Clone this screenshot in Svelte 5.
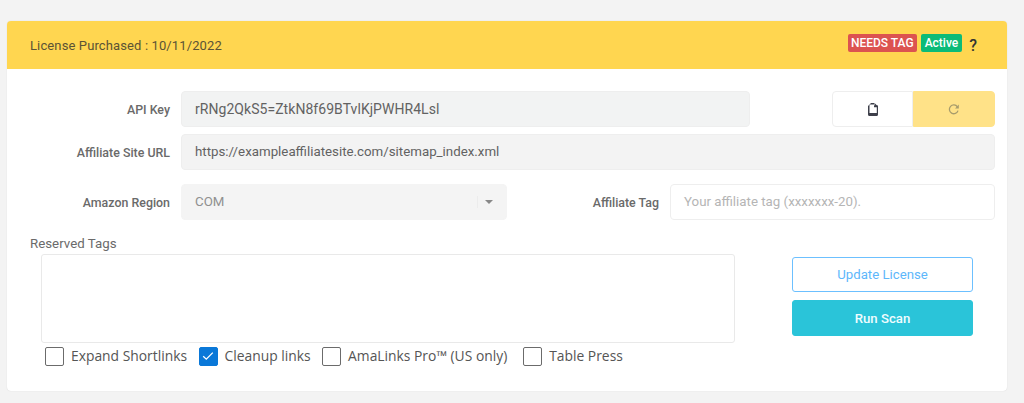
<script lang="ts">
	const options = [
		{ label: 'Expand Shortlinks', checked: false },
		{ label: 'Cleanup links', checked: true },
		{ label: 'AmaLinks Pro™ (US only)', checked: false },
		{ label: 'Table Press', checked: false }
	];
</script>

<div class="page">
	<section class="card">
		<header class="card-header">
			<span class="purchased">License Purchased : 10/11/2022</span>
			<div class="status">
				<span class="badge danger">NEEDS TAG</span>
				<span class="badge success">Active</span>
				<span class="help">?</span>
			</div>
		</header>

		<div class="card-body">
			<div class="row row-key">
				<span class="label">API Key</span>
				<div class="field key-field">rRNg2QkS5=ZtkN8f69BTvlKjPWHR4Lsl</div>
				<div class="key-actions">
					<button class="icon-btn copy" aria-label="Copy">
						<svg width="10" height="13" viewBox="0 0 10 13">
							<path d="M0 3 3 0H6.5V2.5H10V11.5A1.5 1.5 0 0 1 8.5 13H1.5A1.5 1.5 0 0 1 0 11.5z" fill="#3d3f4a" />
							<path d="M1.5 1.5H6V4.2H8.8V10H1.5z" fill="#fff" />
							<path d="M7 .4 9.8 3.2H7z" fill="#3d3f4a" />
						</svg>
					</button>
					<button class="icon-btn refresh" aria-label="Refresh">
						<svg width="12" height="11" viewBox="0 0 12 11" fill="none">
							<path d="M9.4 2.8A4.4 4.4 0 1 0 10 6.6" stroke="#a89c6c" stroke-width="1.3" />
							<path d="M10.8.6v3.8H7z" fill="#a89c6c" />
						</svg>
					</button>
				</div>
			</div>

			<div class="row row-url">
				<span class="label">Affiliate Site URL</span>
				<div class="field grow">https://exampleaffiliatesite.com/sitemap_index.xml</div>
			</div>

			<div class="row row-region">
				<span class="label">Amazon Region</span>
				<div class="field select">
					<span>COM</span>
					<i class="divider"></i>
					<i class="caret"></i>
				</div>
				<span class="label tag-label">Affiliate Tag</span>
				<div class="field tag-input">Your affiliate tag (xxxxxxx-20).</div>
			</div>

			<div class="lower">
				<div class="tags">
					<div class="tags-label">Reserved Tags</div>
					<div class="textarea"></div>
					<div class="options">
						{#each options as option}
							<label class="option">
								<span class="box" class:checked={option.checked}>
									{#if option.checked}
										<svg width="12" height="10" viewBox="0 0 12 10" fill="none">
											<path d="M1.2 5.2 4.3 8.2 10.8 1.6" stroke="#fff" stroke-width="1.3" />
										</svg>
									{/if}
								</span>
								<span class="option-text">{option.label}</span>
							</label>
						{/each}
					</div>
				</div>
				<div class="actions">
					<button class="btn outline">Update License</button>
					<button class="btn scan">Run Scan</button>
				</div>
			</div>
		</div>
	</section>
</div>

<style>
	:global(body) {
		background: #f3f3f3;
	}

	.page {
		box-sizing: border-box;
		height: 403px;
		padding: 21px 17px 12px 7px;
		font-family: Roboto, 'Liberation Sans', sans-serif;
		overflow: hidden;
	}

	.card {
		height: 370px;
		background: #fff;
		border-radius: 4px;
		box-shadow: 0 0 1px rgba(0, 0, 0, 0.18);
		overflow: hidden;
	}

	.card-header {
		display: flex;
		align-items: center;
		justify-content: space-between;
		height: 48px;
		padding: 0 30px 0 23px;
		background: #ffd650;
	}

	.purchased {
		font-size: 13px;
		color: #5b5335;
		letter-spacing: 0.12px;
	}

	.status {
		display: flex;
		align-items: center;
		gap: 4px;
		margin-top: -4px;
	}

	.badge {
		height: 18px;
		line-height: 18px;
		padding: 0 4px;
		border-radius: 2px;
		font-size: 12px;
		font-weight: 500;
		color: #fff;
	}

	.danger {
		background: #dc5350;
		padding: 0 3px;
	}

	.success {
		background: #0cbb78;
	}

	.help {
		margin: 4px 0 0 3px;
		font-size: 16px;
		font-weight: 500;
		color: #333;
	}

	.card-body {
		padding: 22px 12px 0 0;
	}

	.row {
		display: flex;
		align-items: center;
	}

	.row-url {
		margin-top: 7px;
	}

	.row-region {
		margin-top: 14px;
	}

	.label {
		width: 163px;
		flex: none;
		text-align: right;
		font-size: 12.4px;
		font-weight: 500;
		color: #6a6a6a;
	}

	.field {
		box-sizing: border-box;
		height: 36px;
		line-height: 34px;
		margin-left: 11px;
		padding: 0 13px;
		border-radius: 4px;
		background: #f3f3f3;
		border: 1px solid #eeeeee;
		font-size: 13.3px;
		color: #626262;
	}

	.key-field {
		width: 569px;
		background: #f2f3f3;
		font-size: 14px;
		letter-spacing: 0.05px;
	}

	.key-actions {
		display: flex;
		margin-left: 82px;
	}

	.icon-btn {
		display: flex;
		align-items: center;
		justify-content: center;
		box-sizing: border-box;
		height: 36px;
		padding: 0;
	}

	.copy {
		width: 81px;
		background: #fff;
		border: 1px solid #eeeeee;
		border-radius: 4px 0 0 4px;
	}

	.refresh {
		width: 82px;
		background: #ffe288;
		border: 1px solid #ffe288;
		border-radius: 0 4px 4px 0;
	}

	.grow {
		flex: 1;
	}

	.select {
		display: flex;
		align-items: center;
		width: 326px;
		padding-right: 13px;
		background: #f4f4f4;
		border-color: #f4f4f4;
		color: #909090;
	}

	.select span {
		flex: 1;
	}

	.divider {
		width: 1px;
		height: 12px;
		margin-right: 7px;
		background: #ececec;
	}

	.caret {
		width: 0;
		height: 0;
		border-left: 4px solid transparent;
		border-right: 4px solid transparent;
		border-top: 4px solid #888;
	}

	.tag-label {
		width: 152px;
	}

	.tag-input {
		flex: 1;
		background: #fff;
		color: #b5b5b5;
	}

	.lower {
		display: flex;
		margin-top: 17px;
	}

	.tags {
		width: 728px;
		padding-left: 23px;
		box-sizing: border-box;
	}

	.tags-label {
		height: 17px;
		line-height: 14px;
		font-size: 13.3px;
		color: #6a6a6a;
	}

	.textarea {
		box-sizing: border-box;
		height: 89px;
		margin-left: 11px;
		border: 1px solid #e9e9e9;
		border-radius: 3px;
	}

	.options {
		display: flex;
		gap: 11.5px;
		margin: 3px 0 0 15px;
	}

	.option {
		display: flex;
		align-items: center;
		gap: 7px;
		height: 20px;
		font-family: 'Open Sans', 'Noto Sans', sans-serif;
		font-size: 13.85px;
		color: #555;
	}

	.option-text {
		margin-top: -2px;
	}

	.option:last-child {
		margin-left: 4.5px;
	}

	.box {
		display: flex;
		align-items: center;
		justify-content: center;
		box-sizing: border-box;
		width: 19px;
		height: 19px;
		border: 1px solid #6b6b6b;
		border-radius: 2px;
		background: #fff;
	}

	.box.checked {
		background: #0a78d8;
		border-color: #0a78d8;
	}

	.actions {
		display: flex;
		flex-direction: column;
		gap: 8px;
		margin: 20px 0 0 57px;
	}

	.btn {
		box-sizing: border-box;
		width: 181px;
		height: 35px;
		border-radius: 3px;
		font-family: Roboto, sans-serif;
		font-size: 13.2px;
	}

	.outline {
		background: #fff;
		border: 1px solid #6cc0ff;
		color: #5db7fb;
	}

	.scan {
		height: 36px;
		background: #2ac4d9;
		border: 1px solid #2ac4d9;
		color: #f0fdff;
		font-weight: 500;
	}
</style>
